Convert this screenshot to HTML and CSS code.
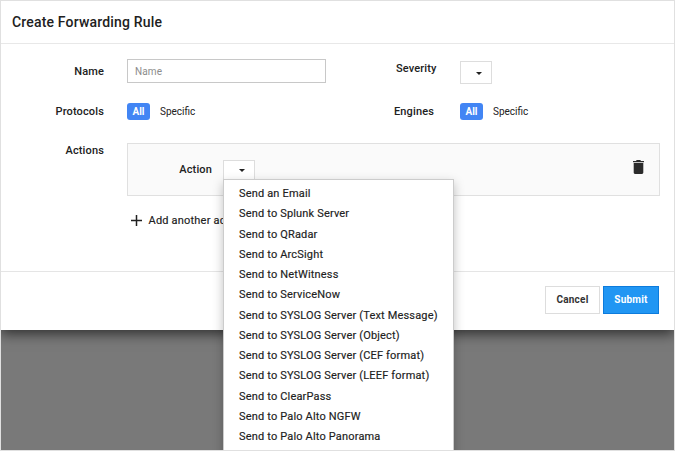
FILE: index.html
```html
<!DOCTYPE html>
<html lang="en">
<head>
<meta charset="utf-8">
<title>Create Forwarding Rule</title>
<link rel="stylesheet" href="styles.css">
</head>
<body>
<div class="frame">
  <section class="modal">
    <header class="modal-header"><h1 class="title">Create Forwarding Rule</h1></header>
    <div class="modal-body">
      <div class="row row-name">
        <label class="label label-name" for="name">Name</label>
        <input class="input" id="name" type="text" placeholder="Name">
        <span class="label label-severity">Severity</span>
        <button class="select select-severity" type="button"><span class="caret"></span></button>
      </div>
      <div class="row row-protocols">
        <span class="label">Protocols</span>
        <div class="toggle"><span class="pill">All</span><span class="option">Specific</span></div>
        <span class="label label-engines">Engines</span>
        <div class="toggle"><span class="pill">All</span><span class="option">Specific</span></div>
      </div>
      <div class="row row-actions">
        <span class="label label-actions">Actions</span>
        <div class="action-box">
          <span class="label action-label">Action</span>
          <div class="dropdown">
            <button class="select select-action" type="button"><span class="caret"></span></button>
            <ul class="menu">
              <li>Send an Email</li>
              <li>Send to Splunk Server</li>
              <li>Send to QRadar</li>
              <li>Send to ArcSight</li>
              <li>Send to NetWitness</li>
              <li>Send to ServiceNow</li>
              <li>Send to SYSLOG Server (Text Message)</li>
              <li>Send to SYSLOG Server (Object)</li>
              <li>Send to SYSLOG Server (CEF format)</li>
              <li>Send to SYSLOG Server (LEEF format)</li>
              <li>Send to ClearPass</li>
              <li>Send to Palo Alto NGFW</li>
              <li>Send to Palo Alto Panorama</li>
            </ul>
          </div>
          <svg class="trash" viewBox="0 0 11 14"><path d="M0 1h3l.7-1h3.600L8 1h3v1.300H0zM.7 3h9.600v9.600c0 .8-.5 1.400-1.300 1.400H2C1.200 14 .7 13.400.7 12.600z"/></svg>
        </div>
      </div>
      <div class="add">
        <svg class="plus" viewBox="0 0 11 11"><path d="M5.500 0v11M0 5.500h11"/></svg>
        <span>Add another action</span>
      </div>
    </div>
    <footer class="modal-footer">
      <button class="btn" type="button">Cancel</button>
      <button class="btn btn-primary" type="button">Submit</button>
    </footer>
  </section>
</div>
</body>
</html>
```

FILE: styles.css
```css
* { box-sizing: border-box; }
body { margin: 0; font-family: Roboto, "Liberation Sans", sans-serif; color: #212121; }
.frame { width: 675px; height: 451px; border: 1px solid #e0e0e0; background: #797979; overflow: hidden; }
.modal { height: 329px; background: #fff; box-shadow: 0 4px 12px rgba(0, 0, 0, .6); }
.modal-header { height: 43px; display: flex; align-items: center; padding: 0 11px; border-bottom: 1px solid #e8e8e8; }
.title { margin: 0; font-size: 14px; font-weight: 500; line-height: 18px; letter-spacing: .17px; }
.modal-body { height: 227px; padding: 15px 14px 0 0; }
.row { display: grid; grid-template-columns: 103px 199px 88px 32px; column-gap: 23px; }
.label { font-size: 11px; font-weight: 500; line-height: 14px; letter-spacing: .14px; text-align: right; white-space: nowrap; }
.row-name { height: 44px; }
.label-name { margin-top: 6px; }
.label-severity { margin: 3px 0 0 47px; justify-self: start; }
.label-engines { justify-self: start; margin-left: 45px; }
.input { width: 199px; height: 24px; border: 1px solid #c8c8c8; padding: 0 7px; font: 10px/14px Roboto, sans-serif; letter-spacing: .1px; outline: 0; }
.input::placeholder { color: #8c8c8c; opacity: 1; }
.select { display: flex; align-items: center; width: 32px; height: 23px; padding: 0 0 0 15px; background: #fff; border: 1px solid #ddd; }
.select-severity { margin-top: 2px; padding-top: 1px; }
.select-action { padding-bottom: 2px; }
.caret { border: 3px solid transparent; border-top-color: #212121; border-bottom: 0; }
.row-protocols { height: 40px; align-items: start; }
.row-protocols .label { margin-top: 2px; }
.toggle { display: flex; align-items: center; height: 17px; gap: 10px; font-size: 10px; }
.pill { flex: none; width: 23px; height: 17px; border-radius: 3px; background: #4285f4; color: #fff; font-weight: 700; line-height: 17px; text-align: center; }
.row-actions { grid-template-columns: 103px 533px; }
.label-actions { margin-top: 1px; }
.action-box { display: flex; height: 53px; padding: 16px 15px 0 51px; background: #fafafa; border: 1px solid #e0e0e0; }
.action-label { width: 33px; margin: 3px 11px 0 0; }
.dropdown { position: relative; height: 23px; }
.menu { position: absolute; z-index: 1; top: 19px; left: 0; width: 231px; height: 290px; margin: 0; padding: 4px 15px; list-style: none; background: #fff; border: 1px solid #ccc; box-shadow: 0 4px 10px rgba(0, 0, 0, .25); font-size: 11px; line-height: 20.27px; font-weight: 400; letter-spacing: .17px; -webkit-text-stroke: .15px #212121; white-space: nowrap; }
.trash { width: 11px; height: 14px; margin-left: auto; fill: #2b2b2b; }
.add { display: flex; align-items: center; gap: 7px; height: 16px; margin: 16px 0 0 129.500px; font-size: 11px; letter-spacing: .2px; -webkit-text-stroke: .15px #212121; }
.plus { width: 11px; height: 11px; stroke: #212121; stroke-width: 1.5; fill: none; }
.modal-footer { display: flex; justify-content: flex-end; gap: 3px; padding: 14px 15px 0; border-top: 1px solid #e5e5e5; }
.btn { width: 55px; height: 28px; padding: 0; border: 1px solid #ddd; background: #fff; color: #333; font: 700 10px/14px Roboto, sans-serif; letter-spacing: .2px; }
.btn-primary { width: 56px; background: #2196f3; border-color: #0d7bdc; color: #fff; }
```
